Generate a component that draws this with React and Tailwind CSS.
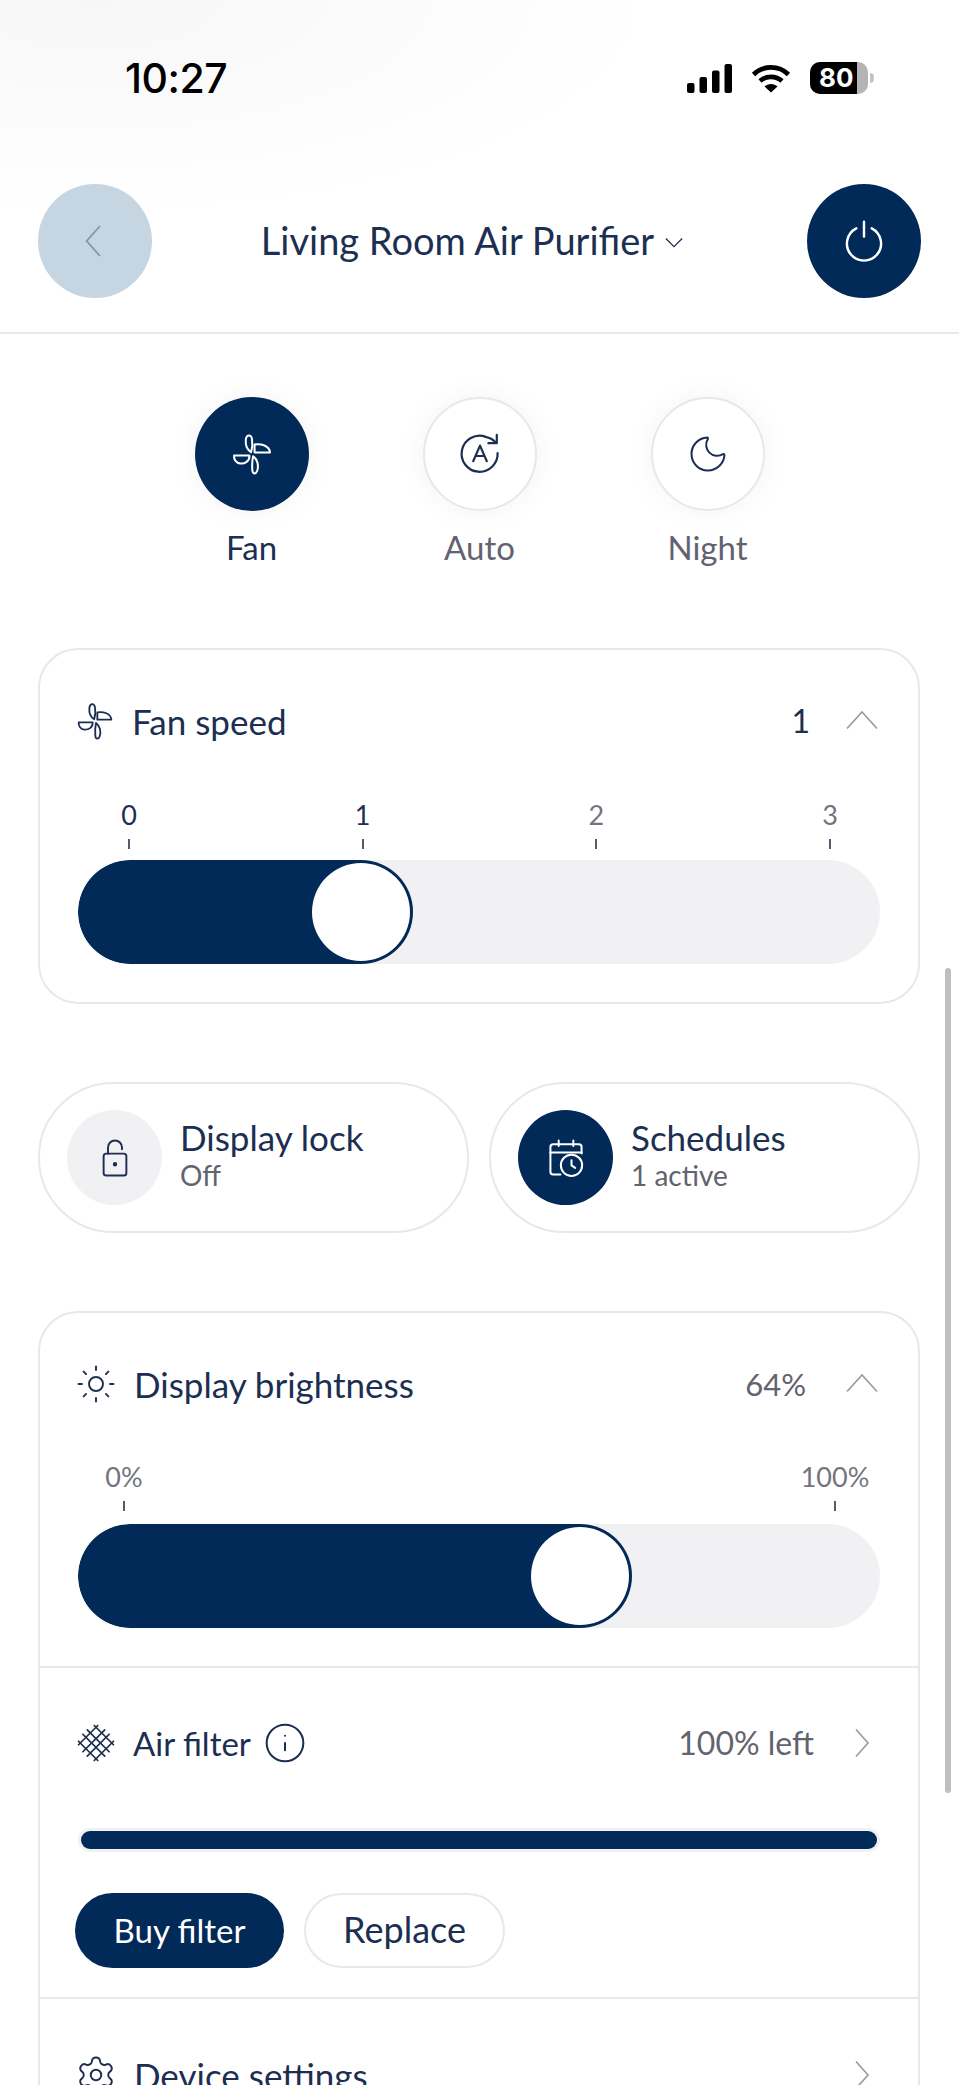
import React from "react";
import { Moon, Sun, Settings, Info } from "lucide-react";

const FanIcon = ({ className }) => (
  <svg viewBox="0 0 24 24" fill="none" stroke="currentColor" strokeWidth="1.1" strokeLinejoin="round" className={className}>
    <path d="M11.5 11 C9.4 9.6 8.4 6.8 8.6 4.4 C8.8 1.4 11.6 1 12 3.8 C12.4 6.2 12.2 8.8 11.5 11 Z" />
    <path d="M13.4 11.2 V6.8 C16.8 6.2 21.6 7.4 21.8 11.2 Z" />
    <path d="M10.6 12.8 C10.8 16 8 17.4 5.6 17.2 C3.4 17 2 15 2.2 12.8 Z" />
    <path d="M12.6 13.2 C15 15 15.8 18.4 14.8 21.2 C14 23.2 12.4 23 12.2 21 C12 18.4 12 15.8 12.6 13.2 Z" />
  </svg>
);

const AutoIcon = ({ className }) => (
  <svg viewBox="0 0 24 24" fill="none" stroke="currentColor" strokeWidth="1.1" strokeLinecap="round" strokeLinejoin="round" className={className}>
    <path d="M20.8 11.5 A9 9 0 1 1 14.8 3.4" />
    <path d="M14.6 3.4 C16.6 3.8 18.6 4.6 19.8 6.2" />
    <path d="M20.4 2.4 V6.6 H16.2" />
    <path d="M8.6 15.6 L12 7.8 L15.4 15.6 M9.8 13 H14.2" />
  </svg>
);

const LockIcon = ({ className }) => (
  <svg viewBox="0 0 24 24" fill="none" stroke="currentColor" strokeWidth="1.1" strokeLinecap="round" strokeLinejoin="round" className={className}>
    <rect x="5.5" y="9.5" width="13" height="12.5" rx="1.5" />
    <path d="M8 9.5 V6 a4 4 0 0 1 8 0 V7" />
    <circle cx="12" cy="15.6" r="0.7" fill="currentColor" />
  </svg>
);

const ScheduleIcon = ({ className }) => (
  <svg viewBox="0 0 24 24" fill="none" stroke="currentColor" strokeWidth="1.1" strokeLinecap="round" strokeLinejoin="round" className={className}>
    <path d="M9 21 H5 a1.5 1.5 0 0 1 -1.5 -1.5 V6 A1.5 1.5 0 0 1 5 4.5 H19 A1.5 1.5 0 0 1 20.5 6 V9.5" />
    <path d="M3.5 9 H20.5 M8 2.5 V5.5 M16 2.5 V5.5" />
    <circle cx="15" cy="16" r="5.8" />
    <path d="M15 13.2 V16 L17 17.4" />
  </svg>
);

const FilterIcon = ({ className }) => (
  <svg viewBox="0 0 24 24" fill="none" stroke="currentColor" strokeWidth="1" strokeLinecap="round" className={className}>
    <path d="M2 11 L13 22 M4.5 7 L17 19.5 M7 4.5 L19.5 17 M11 2 L22 13" />
    <path d="M2 13 L13 2 M4.5 17 L17 4.5 M7 19.5 L19.5 7 M11 22 L22 11" />
  </svg>
);

const Chevron = ({ dir, className }) => {
  const points = {
    left: "15,3 7,12 15,21",
    right: "8,3 16,12 8,21",
    up: "2,17 12,6 22,17",
    down: "5,9 12,16 19,9",
  };
  return (
    <svg viewBox="0 0 24 24" fill="none" stroke="currentColor" strokeWidth="1.1" className={className}>
      <polyline points={points[dir]} />
    </svg>
  );
};

const PowerIcon = () => (
  <svg viewBox="0 0 40 40" fill="none" stroke="white" strokeWidth="2.2" strokeLinecap="round" className="w-[44px] h-[44px]">
    <path d="M13 8.5 A15.5 15.5 0 1 0 27 8.5" />
    <path d="M20 2.5 V16" />
  </svg>
);

const StatusBar = () => (
  <div className="flex items-center justify-between pl-[125px] pr-[85px] pt-[58px] h-[98px]">
    <span className="text-[41px] leading-[40px] font-medium text-black font-['Inter',sans-serif] tracking-[-0.5px]">10:27</span>
    <div className="flex items-center gap-[19px]">
      <svg viewBox="0 0 45 29" className="w-[45px] h-[29px]" fill="black">
        <rect x="0" y="19" width="7.5" height="10" rx="2" />
        <rect x="12.5" y="13" width="7.5" height="16" rx="2" />
        <rect x="25" y="6.5" width="7.5" height="22.5" rx="2" />
        <rect x="37.5" y="0" width="7.5" height="29" rx="2" />
      </svg>
      <svg viewBox="0 0 40 29" className="w-[40px] h-[29px]" fill="none" stroke="black" strokeWidth="4.6">
        <path d="M2.5 10.5 C12 1 28 1 37.5 10.5" />
        <path d="M9 17 C15 11.5 25 11.5 31 17" />
        <path d="M20 28.5 L13.5 22.5 C17 19 23 19 26.5 22.5 Z" fill="black" stroke="none" />
      </svg>
      <div className="flex items-center">
        <div className="relative w-[58px] h-[32px] rounded-[10px] overflow-hidden bg-[#b4b4b4]">
          <div className="absolute left-0 top-0 bottom-0 w-[47px] bg-black" />
          <span className="absolute left-[9px] top-0 leading-[32px] text-[26px] font-bold text-white font-['Inter',sans-serif]">80</span>
        </div>
        <div className="w-[4px] h-[10px] ml-[2px] rounded-r-full bg-[#c4c4c4]" />
      </div>
    </div>
  </div>
);

const Header = () => (
  <div className="h-[236px] border-b-2 border-[#e9e9eb] flex items-center justify-between px-[38px] pt-[61px] pb-[10px]">
    <div className="w-[114px] h-[114px] rounded-full bg-[#c5d5e1] flex items-center justify-center text-[#8496a8]">
      <Chevron dir="left" className="w-[40px] h-[40px]" />
    </div>
    <div className="flex items-center gap-[6px] mr-[10px] -mt-[2px] text-[#1c2f52]">
      <span className="text-[38px] leading-[44px]">Living Room Air Purifier</span>
      <Chevron dir="down" className="w-[28px] h-[28px] mt-[4px]" />
    </div>
    <div className="w-[114px] h-[114px] rounded-full bg-[#022a58] flex items-center justify-center">
      <PowerIcon />
    </div>
  </div>
);

const ModeButton = ({ label, active, children }) => (
  <div className="w-[114px] flex flex-col items-center">
    <div
      className={
        active
          ? "w-[114px] h-[114px] rounded-full bg-[#022a58] text-white flex items-center justify-center shadow-[0_0_30px_rgba(0,0,0,0.05)]"
          : "w-[114px] h-[114px] rounded-full bg-white border-2 border-[#e8e8ea] text-[#1c2f52] flex items-center justify-center shadow-[0_0_30px_rgba(0,0,0,0.05)]"
      }
    >
      {children}
    </div>
    <span className={active ? "mt-[16px] text-[33px] leading-[40px] text-[#1c2f52]" : "mt-[16px] text-[33px] leading-[40px] text-[#62636e]"}>
      {label}
    </span>
  </div>
);

const Slider = ({ fill, knob }) => (
  <div className="relative h-[104px] rounded-full bg-[#f1f1f3] overflow-hidden">
    <div className="h-full rounded-full bg-[#022a58]" style={{ width: fill }} />
    <div className="absolute top-[3px] w-[98px] h-[98px] rounded-full bg-white" style={{ left: knob }} />
  </div>
);

const Tick = ({ label, dark, width }) => (
  <div className="flex flex-col items-center" style={{ width }}>
    <span className={dark ? "text-[27px] leading-[34px] text-[#1c2f52]" : "text-[27px] leading-[34px] text-[#74747e]"}>{label}</span>
    <div className="w-[2px] h-[10px] mt-[7px] bg-[#555c6e]" />
  </div>
);

const RowTitle = ({ icon, children }) => (
  <div className="flex items-center gap-[17px] -ml-[3px] text-[#1c2f52]">
    {icon}
    <span className="text-[35px] leading-[40px]">{children}</span>
  </div>
);

const PillCard = ({ title, sub, active, children }) => (
  <div className="flex-1 h-[151px] rounded-full bg-white border-2 border-[#e8e8ea] flex items-center gap-[18px] pl-[27px]">
    <div
      className={
        active
          ? "w-[95px] h-[95px] rounded-full bg-[#022a58] text-white flex items-center justify-center"
          : "w-[95px] h-[95px] rounded-full bg-[#f1f1f3] text-[#1c2f52] flex items-center justify-center"
      }
    >
      {children}
    </div>
    <div className="flex flex-col -mt-[6px]">
      <span className="text-[35px] leading-[40px] text-[#1c2f52]">{title}</span>
      <span className="text-[28px] leading-[36px] text-[#62636e]">{sub}</span>
    </div>
  </div>
);

export default function App() {
  return (
    <div className="relative w-[959px] h-[2085px] overflow-hidden bg-white font-['Lato',sans-serif] antialiased">
      <div className="bg-[radial-gradient(ellipse_at_10%_0%,#f7f7f8_0%,#ffffff_45%),radial-gradient(ellipse_at_50%_75%,#f8f8fa_0%,#ffffff_40%)]">
        <StatusBar />
        <Header />
      </div>

      <div className="flex justify-center gap-[114px] pt-[63px]">
        <ModeButton label="Fan" active>
          <FanIcon className="w-[44px] h-[44px]" />
        </ModeButton>
        <ModeButton label="Auto">
          <AutoIcon className="w-[48px] h-[48px]" />
        </ModeButton>
        <ModeButton label="Night">
          <Moon strokeWidth={1.1} className="w-[44px] h-[44px]" />
        </ModeButton>
      </div>

      <div className="pl-[38px] pr-[39px] pt-[81px]">
        <div className="h-[356px] rounded-[40px] bg-white border-2 border-[#e8e8ea] px-[38px] pt-[51px]">
          <div className="flex items-center justify-between h-[40px]">
            <RowTitle icon={<FanIcon className="w-[40px] h-[40px]" />}>Fan speed</RowTitle>
            <div className="flex items-center gap-[34px]">
              <span className="text-[32px] leading-[40px] text-[#1c2f52]">1</span>
              <Chevron dir="up" className="w-[36px] h-[36px] text-[#9a9aa2]" />
            </div>
          </div>
          <div className="flex justify-between pl-[31px] pr-[30px] mt-[57px] mb-[11px]">
            <Tick label="0" dark width="40px" />
            <Tick label="1" dark width="40px" />
            <Tick label="2" width="40px" />
            <Tick label="3" width="40px" />
          </div>
          <Slider fill="335px" knob="234px" />
        </div>

        <div className="flex gap-[20px] mt-[78px]">
          <PillCard title="Display lock" sub="Off">
            <LockIcon className="w-[42px] h-[42px]" />
          </PillCard>
          <PillCard title="Schedules" sub="1 active" active>
            <ScheduleIcon className="w-[44px] h-[44px]" />
          </PillCard>
        </div>

        <div className="mt-[78px] rounded-t-[40px] bg-white border-2 border-[#e8e8ea]">
          <div className="h-[355px] border-b-2 border-[#e8e8ea] px-[38px] pt-[51px]">
            <div className="flex items-center justify-between h-[40px]">
              <RowTitle icon={<Sun strokeWidth={1.1} className="w-[42px] h-[42px]" />}>Display brightness</RowTitle>
              <div className="flex items-center gap-[38px]">
                <span className="text-[31px] leading-[40px] text-[#62636e]">64%</span>
                <Chevron dir="up" className="w-[36px] h-[36px] text-[#9a9aa2]" />
              </div>
            </div>
            <div className="flex justify-between pl-[6px] pr-[5px] mt-[56px] mb-[13px]">
              <Tick label="0%" width="80px" />
              <Tick label="100%" width="80px" />
            </div>
            <Slider fill="554px" knob="453px" />
          </div>

          <div className="h-[331px] border-b-2 border-[#e8e8ea] px-[38px] pt-[55px]">
            <div className="flex items-center justify-between h-[40px]">
              <div className="flex items-center gap-[12px] text-[#1c2f52]">
                <div className="flex items-center gap-[16px] -ml-[3px]">
                  <FilterIcon className="w-[42px] h-[42px]" />
                  <span className="text-[33px] leading-[40px]">Air filter</span>
                </div>
                <Info strokeWidth={1.1} className="w-[44px] h-[44px]" />
              </div>
              <div className="flex items-center gap-[30px]">
                <span className="text-[32px] leading-[40px] text-[#62636e]">100% left</span>
                <Chevron dir="right" className="w-[36px] h-[36px] text-[#9a9aa2]" />
              </div>
            </div>
            <div className="mt-[65px] h-[24px] rounded-full bg-[#f1f1f3] p-[3px]">
              <div className="h-full rounded-full bg-[#022a58]" />
            </div>
            <div className="flex gap-[20px] mt-[41px] -ml-[3px]">
              <div className="w-[209px] h-[75px] rounded-full bg-[#022a58] text-white text-[33px] flex items-center justify-center">Buy filter</div>
              <div className="w-[201px] h-[75px] pb-[4px] rounded-full bg-white border-2 border-[#e8e8ea] text-[#1c2f52] text-[36px] flex items-center justify-center">Replace</div>
            </div>
          </div>

          <div className="h-[200px] px-[38px] pt-[56px]">
            <div className="flex items-center justify-between h-[40px]">
              <RowTitle icon={<Settings strokeWidth={1.1} className="w-[42px] h-[42px]" />}>Device settings</RowTitle>
              <Chevron dir="right" className="w-[36px] h-[36px] text-[#9a9aa2]" />
            </div>
          </div>
        </div>
      </div>

      <div className="absolute left-[945px] top-[968px] w-[6px] h-[825px] rounded-full bg-[#bfbfc2]" />
    </div>
  );
}
